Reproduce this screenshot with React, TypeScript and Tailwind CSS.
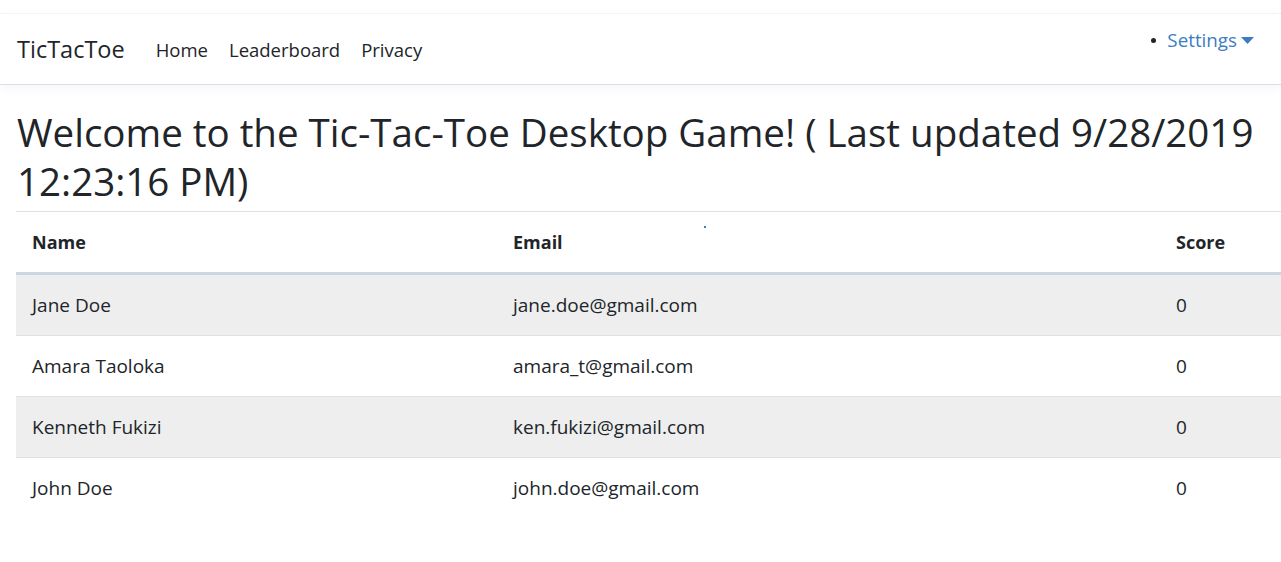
const players = [
  { name: "Jane Doe", email: "jane.doe@gmail.com", score: 0 },
  { name: "Amara Taoloka", email: "amara_t@gmail.com", score: 0 },
  { name: "Kenneth Fukizi", email: "ken.fukizi@gmail.com", score: 0 },
  { name: "John Doe", email: "john.doe@gmail.com", score: 0 },
];

function Navbar() {
  return (
    <header className="pt-[13px]">
      <div className="border-t border-dotted border-[#ececec]" />
      <nav className="h-[71px] flex items-start justify-between border-b border-[#d5e0ea] shadow-[0_4px_10px_rgba(0,0,0,0.04)]">
        <div className="flex items-center h-full pl-[17px] pt-[2px]">
          <span className="text-[23.5px] text-[#212529] mr-[31px]">TicTacToe</span>
          <ul className="flex gap-[21px] text-[18.5px] text-[#212529]">
            <li>Home</li>
            <li>Leaderboard</li>
            <li>Privacy</li>
          </ul>
        </div>
        <ul className="flex items-center pt-[12px] pr-[27px] text-[18.8px]">
          <li className="flex items-center">
            <span className="w-[5px] h-[5px] rounded-full bg-[#212529] mr-[11px]" />
            <span className="text-[#3a7dc0]">Settings</span>
            <svg width="13" height="7" viewBox="0 0 13 7" className="ml-[4px] mt-[1px]">
              <path d="M0 0 L13 0 L6.5 7 Z" fill="#3a7dc0" />
            </svg>
          </li>
        </ul>
      </nav>
    </header>
  );
}

export default function App() {
  return (
    <div className="min-h-[562px] bg-white font-['Open_Sans',sans-serif] text-[#212529]">
      <Navbar />
      <main className="pl-4">
        <h1 className="mt-[23px] mb-[5px] text-[38.5px] leading-[49px] pl-[1px]">
          Welcome to the Tic-Tac-Toe Desktop Game! ( Last updated 9/28/2019 12:23:16 PM)
        </h1>
        <div className="relative border-t border-[#dee2e6] text-[19px]">
          <span className="absolute left-[688px] top-[14px] w-[2px] h-[2px] bg-[#3a7dc0]" />
          <div className="grid grid-cols-[481px_663px_1fr] h-[63px] items-center font-bold text-[18px] border-b-[3px] border-[#cbd8e1]">
            <div className="pl-4">Name</div>
            <div className="pl-4">Email</div>
            <div className="pl-4">Score</div>
          </div>
          {players.map((p, i) => (
            <div
              key={p.email}
              className={`grid grid-cols-[481px_663px_1fr] h-[61px] items-center border-b border-[#dee2e6] ${
                i % 2 === 0 ? "bg-[#eeeeee]" : "bg-white"
              } ${i === players.length - 1 ? "border-b-0" : ""}`}
            >
              <div className="pl-4">{p.name}</div>
              <div className="pl-4">{p.email}</div>
              <div className="pl-4">{p.score}</div>
            </div>
          ))}
        </div>
      </main>
    </div>
  );
}
